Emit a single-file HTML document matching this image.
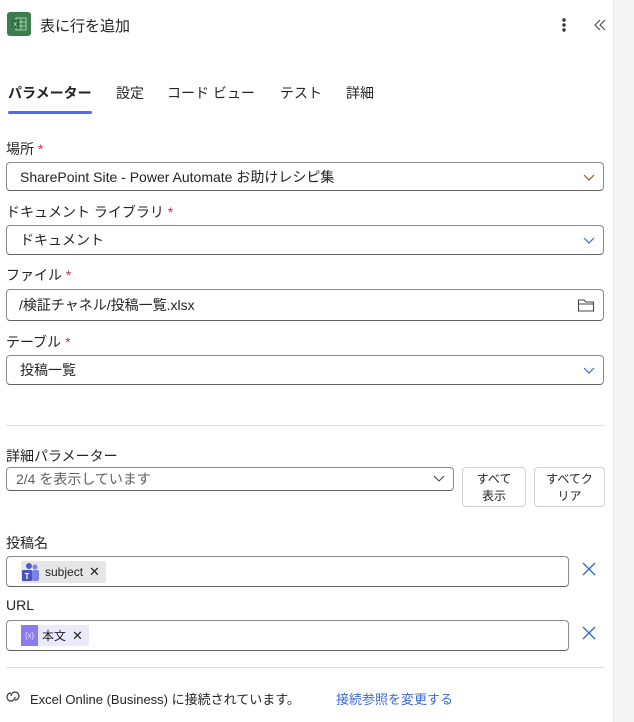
<!DOCTYPE html>
<html><head><meta charset="utf-8"><style>
*{box-sizing:border-box;margin:0;padding:0}
body{width:634px;height:722px;background:#fff;font-family:"Liberation Sans","Noto Sans CJK JP",sans-serif;color:#242424;position:relative;overflow:hidden;font-size:14px}
.a{position:absolute}
.lbl{position:absolute;left:6px;font-size:14px;color:#242424}
.lbl b{color:#c4314b;font-weight:normal}
.inp{position:absolute;left:6px;width:598px;border:1px solid #8a8a8a;border-bottom-color:#616161;border-radius:4px;background:#fff;padding-left:13px;display:flex;align-items:center;font-size:14px}
.chev{position:absolute;right:8px;top:50%;margin-top:-3px}
.btn{position:absolute;border:1px solid #d1d1d1;border-radius:4px;font-size:12px;text-align:center;line-height:17px;padding-top:3px;color:#242424}
.x{position:absolute;left:581px}
</style></head><body>
<div class="a" style="left:613px;top:0;width:21px;height:722px;background:#f5f5f5;border-left:1px solid #e6e6e6"></div>
<div class="a" style="left:7px;top:12px;width:24px;height:24px;background:#3d7d4d;border-radius:3px">
<svg width="24" height="24"><rect x="9" y="6" width="10" height="12" fill="none" stroke="#9fcfae" stroke-width="1"/><line x1="9" y1="10" x2="19" y2="10" stroke="#9fcfae"/><line x1="9" y1="14" x2="19" y2="14" stroke="#9fcfae"/><line x1="14" y1="6" x2="14" y2="18" stroke="#9fcfae"/><rect x="5" y="8" width="7" height="8" fill="#2a6b3d"/><text x="6.3" y="14.5" font-size="6" fill="#fff" font-family="Liberation Sans">X</text></svg></div>
<div class="a" style="left:40px;top:15px;font-size:15px">表に行を追加</div>
<svg class="a" style="left:560px;top:17px" width="8" height="16"><circle cx="4" cy="3" r="1.7" fill="#333"/><circle cx="4" cy="8" r="1.7" fill="#333"/><circle cx="4" cy="13" r="1.7" fill="#333"/></svg>
<svg class="a" style="left:593px;top:18px" width="14" height="14"><path d="M7 2 L2 7 L7 12 M12 2 L7 7 L12 12" fill="none" stroke="#444" stroke-width="1.1"/></svg>
<div class="a" style="left:8px;top:83px;font-size:14px;font-weight:bold">パラメーター</div>
<div class="a" style="left:116px;top:83px;font-size:14px">設定</div>
<div class="a" style="left:167px;top:83px;font-size:14px">コード ビュー</div>
<div class="a" style="left:280px;top:83px;font-size:14px">テスト</div>
<div class="a" style="left:346px;top:83px;font-size:14px">詳細</div>
<div class="a" style="left:8px;top:111px;width:84px;height:3px;background:#4f6bed;border-radius:2px"></div>

<div class="lbl" style="top:139px">場所 <b>*</b></div>
<div class="inp" style="top:162px;height:29px">SharePoint Site - Power Automate お助けレシピ集<svg class="chev" width="12" height="8"><path d="M1 1 L6 6 L11 1" fill="none" stroke="#8a5a2a" stroke-width="1.2"/></svg></div>
<div class="lbl" style="top:202px">ドキュメント ライブラリ <b>*</b></div>
<div class="inp" style="top:225px;height:30px">ドキュメント<svg class="chev" width="12" height="8"><path d="M1 1 L6 6 L11 1" fill="none" stroke="#3b68d8" stroke-width="1.2"/></svg></div>
<div class="lbl" style="top:265px">ファイル <b>*</b></div>
<div class="inp" style="top:289px;height:32px;padding-left:12px">/検証チャネル/投稿一覧.xlsx<svg class="chev" style="margin-top:-8px" width="18" height="16"><path d="M1.5 3 H7 L9 5 H16.5 V14 H1.5 Z M1.5 7 H16.5" fill="none" stroke="#444" stroke-width="1.1"/></svg></div>
<div class="lbl" style="top:332px">テーブル <b>*</b></div>
<div class="inp" style="top:355px;height:30px">投稿一覧<svg class="chev" width="12" height="8"><path d="M1 1 L6 6 L11 1" fill="none" stroke="#3b68d8" stroke-width="1.2"/></svg></div>
<div class="a" style="left:6px;top:425px;width:599px;height:1px;background:#e0e0e0"></div>

<div class="lbl" style="top:446px">詳細パラメーター</div>
<div class="inp" style="top:467px;width:448px;height:24px;padding-left:9px;color:#616161">2/4 を表示しています<svg class="chev" width="12" height="8" style="margin-top:-4px"><path d="M1 1 L6 6 L11 1" fill="none" stroke="#444" stroke-width="1.1"/></svg></div>
<div class="btn" style="left:462px;top:467px;width:64px;height:40px">すべて<br>表示</div>
<div class="btn" style="left:534px;top:467px;width:71px;height:40px">すべてク<br>リア</div>

<div class="lbl" style="top:533px">投稿名</div>
<div class="inp" style="top:556px;width:563px;height:31px;padding-left:14px"><span style="display:flex;align-items:center;background:#e6e6e6;height:22px;padding-right:6px;font-size:12px;border-radius:2px"><svg width="20" height="20" style="margin-right:4px"><circle cx="14" cy="5" r="2.5" fill="#7b83eb"/><circle cx="8" cy="4" r="3" fill="#5059c9"/><rect x="11" y="8" width="7" height="11" rx="2" fill="#7b83eb"/><rect x="1" y="8" width="10" height="11" rx="1" fill="#4b53bc"/><text x="3.5" y="17" font-size="8" fill="#fff" font-family="Liberation Sans" font-weight="bold">T</text></svg>subject <span style="margin-left:6px;font-size:13px">✕</span></span></div>
<svg class="x" style="top:561px" width="16" height="16"><path d="M2 2 L14 14 M14 2 L2 14" stroke="#3b68d8" stroke-width="1.4"/></svg>
<div class="lbl" style="top:597px">URL</div>
<div class="inp" style="top:620px;width:563px;height:31px;padding-left:14px"><span style="display:flex;align-items:center;background:#ebe9fc;height:21px;padding-right:6px;font-size:12px;border-radius:2px"><span style="width:17px;height:21px;background:#8a7cf0;color:#e4e0ff;font-size:8px;display:flex;align-items:center;justify-content:center;margin-right:4px">{x}</span>本文 <span style="margin-left:6px;font-size:13px">✕</span></span></div>
<svg class="x" style="top:625px" width="16" height="16"><path d="M2 2 L14 14 M14 2 L2 14" stroke="#3b68d8" stroke-width="1.4"/></svg>
<div class="a" style="left:6px;top:667px;width:599px;height:1px;background:#e0e0e0"></div>

<svg class="a" style="left:6px;top:690px" width="15" height="14"><path d="M5 3 a4 4 0 1 0 4 4 M9 10 a4 4 0 1 0 -4 -4" fill="none" stroke="#333" stroke-width="1.2"/></svg>
<div class="a" style="left:30px;top:689px;font-size:13px">Excel Online (Business) に接続されています。</div>
<div class="a" style="left:336px;top:689px;font-size:13px;color:#3b68d8">接続参照を変更する</div>
</body></html>
